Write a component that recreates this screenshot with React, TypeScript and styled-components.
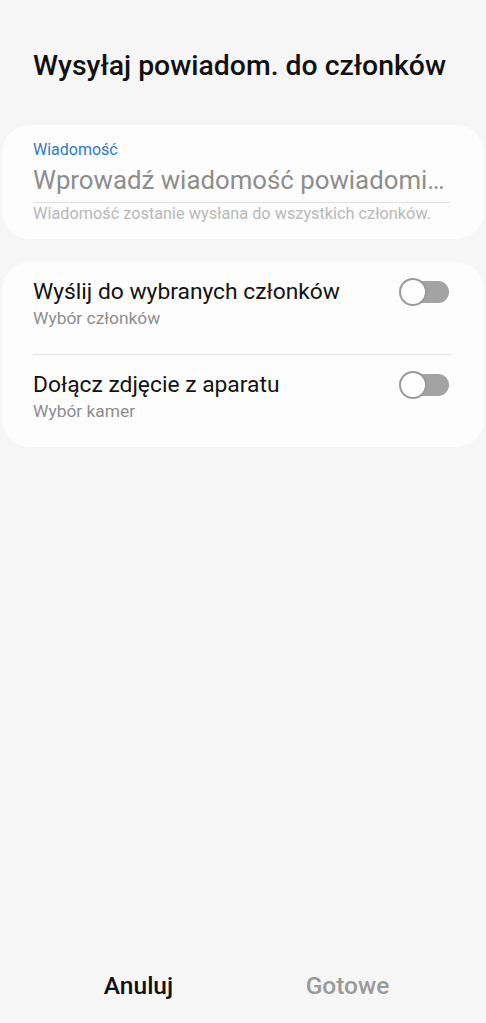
import styled, { createGlobalStyle } from 'styled-components';

const GlobalStyle = createGlobalStyle`
  html, body {
    margin: 0;
    padding: 0;
    background: #f6f6f6;
  }
  body {
    font-family: Roboto, "Noto Sans", sans-serif;
  }
  * {
    box-sizing: border-box;
  }
`

const Screen = styled.div`
  display: flex;
  flex-direction: column;
  height: 1023px;
  width: 486px;
  background: #f6f6f6;
`

const Title = styled.h1`
  margin: 0;
  padding: 49px 0 0 33px;
  font-size: 28.4px;
  font-weight: 500;
  line-height: 34px;
  color: #111;
  white-space: nowrap;
`

const Card = styled.div<{ $top: number }>`
  margin: ${p => p.$top}px 2px 0;
  background: #fdfdfd;
  border-radius: 28px;
  padding: 0 33px 0 31px;
`

const Field = styled.div`
  padding: 15px 0 15px;
`

const FieldLabel = styled.div`
  font-size: 16px;
  color: #2a7bc4;
  line-height: 20px;
`

const FieldInput = styled.div`
  font-size: 25.8px;
  color: #8d8d8d;
  line-height: 32px;
  padding: 4px 0 6px;
  border-bottom: 1px solid #e2e2e2;
  white-space: nowrap;
`

const FieldHelper = styled.div`
  font-size: 16.3px;
  color: #b8b8b8;
  line-height: 21px;
  white-space: nowrap;
`

const Row = styled.div<{ $divider?: boolean }>`
  display: flex;
  align-items: flex-start;
  justify-content: space-between;
  padding: 16px 0 25px;
  border-top: ${p => (p.$divider ? '1px solid #e4e4e4' : 'none')};
`

const RowText = styled.div`
  display: flex;
  flex-direction: column;
`

const RowTitle = styled.div`
  font-size: 22.8px;
  color: #121212;
  line-height: 28px;
  white-space: nowrap;
`

const RowSub = styled.div`
  font-size: 17.4px;
  color: #8d8d8d;
  line-height: 22px;
  margin-top: 1px;
`

const Switch = styled.div`
  position: relative;
  width: 50px;
  height: 28px;
  margin-right: 2px;
  flex-shrink: 0;
`

const Track = styled.div`
  position: absolute;
  left: 4px;
  right: 0;
  top: 3px;
  height: 22px;
  border-radius: 11px;
  background: #a3a3a3;
`

const Thumb = styled.div`
  position: absolute;
  left: 0;
  top: 0;
  width: 28px;
  height: 28px;
  border-radius: 50%;
  background: #fefefe;
  border: 2px solid #9a9a9a;
`

const Spacer = styled.div`
  flex: 1;
`

const Footer = styled.div`
  display: grid;
  grid-template-columns: 1fr 1fr;
  padding: 0 34px 22px;
`

const FooterButton = styled.div<{ $muted?: boolean }>`
  text-align: center;
  font-size: 24.5px;
  font-weight: 500;
  line-height: 30px;
  color: ${p => (p.$muted ? '#9a9a9a' : '#111')};
`

function Toggle() {
  return (
    <Switch>
      <Track />
      <Thumb />
    </Switch>
  )
}

function App() {
  const rows = [
    { title: 'Wyślij do wybranych członków', sub: 'Wybór członków' },
    { title: 'Dołącz zdjęcie z aparatu', sub: 'Wybór kamer' },
  ]

  return (
    <>
      <GlobalStyle />
      <Screen>
        <Title>Wysyłaj powiadom. do członków</Title>
        <Card $top={42}>
          <Field>
            <FieldLabel>Wiadomość</FieldLabel>
            <FieldInput>Wprowadź wiadomość powiadomi…</FieldInput>
            <FieldHelper>Wiadomość zostanie wysłana do wszystkich członków.</FieldHelper>
          </Field>
        </Card>
        <Card $top={23}>
          {rows.map((row, index) => (
            <Row key={index} $divider={index > 0}>
              <RowText>
                <RowTitle>{row.title}</RowTitle>
                <RowSub>{row.sub}</RowSub>
              </RowText>
              <Toggle />
            </Row>
          ))}
        </Card>
        <Spacer />
        <Footer>
          <FooterButton>Anuluj</FooterButton>
          <FooterButton $muted>Gotowe</FooterButton>
        </Footer>
      </Screen>
    </>
  )
}

export default App;
